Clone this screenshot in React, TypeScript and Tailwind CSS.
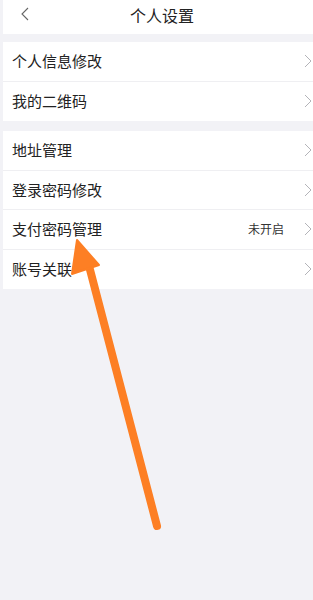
import React from "react";

const font = { fontFamily: '"Noto Sans CJK SC", "Noto Sans", sans-serif' };

function Chevron() {
  return (
    <svg width="8" height="14" viewBox="0 0 8 14" className="shrink-0">
      <path d="M1 1 L7 7 L1 13" fill="none" stroke="#b3b3b8" strokeWidth="1" />
    </svg>
  );
}

function Row({ label, value, last }: { label: string; value?: string; last?: boolean }) {
  return (
    <div className={`flex h-[39.5px] items-center pl-[9px] pr-[1px] ${last ? "" : "border-b border-[#efeff2]"}`}>
      <span className="flex-1 text-[15px] text-[#222]">{label}</span>
      {value && <span className="mr-[20px] text-[12px] text-[#333]">{value}</span>}
      <Chevron />
    </div>
  );
}

export default function App() {
  return (
    <div className="relative h-[600px] w-[313px] overflow-hidden bg-[#f2f2f6] pl-[3px]" style={font}>
      <div className="relative flex h-[34px] items-center justify-center bg-white pb-[4px] pl-[8px]">
        <svg width="8" height="14" viewBox="0 0 8 14" className="absolute left-[18px] top-[7px]">
          <path d="M7 1 L1 7 L7 13" fill="none" stroke="#666" strokeWidth="1.1" />
        </svg>
        <span className="text-[16px] text-[#222]">个人设置</span>
      </div>
      <div className="mt-[8px] bg-white">
        <Row label="个人信息修改" />
        <Row label="我的二维码" last />
      </div>
      <div className="mt-[10px] bg-white">
        <Row label="地址管理" />
        <Row label="登录密码修改" />
        <Row label="支付密码管理" value="未开启" />
        <Row label="账号关联" last />
      </div>
      <svg className="pointer-events-none absolute left-0 top-0" width="313" height="600" viewBox="0 0 313 600">
        <line x1="157" y1="526" x2="88" y2="262" stroke="#fd7f24" strokeWidth="8" strokeLinecap="round" />
        <polygon points="77,240 72,274 99,265" fill="#fd7f24" stroke="#fd7f24" strokeWidth="2" strokeLinejoin="round" />
      </svg>
    </div>
  );
}
